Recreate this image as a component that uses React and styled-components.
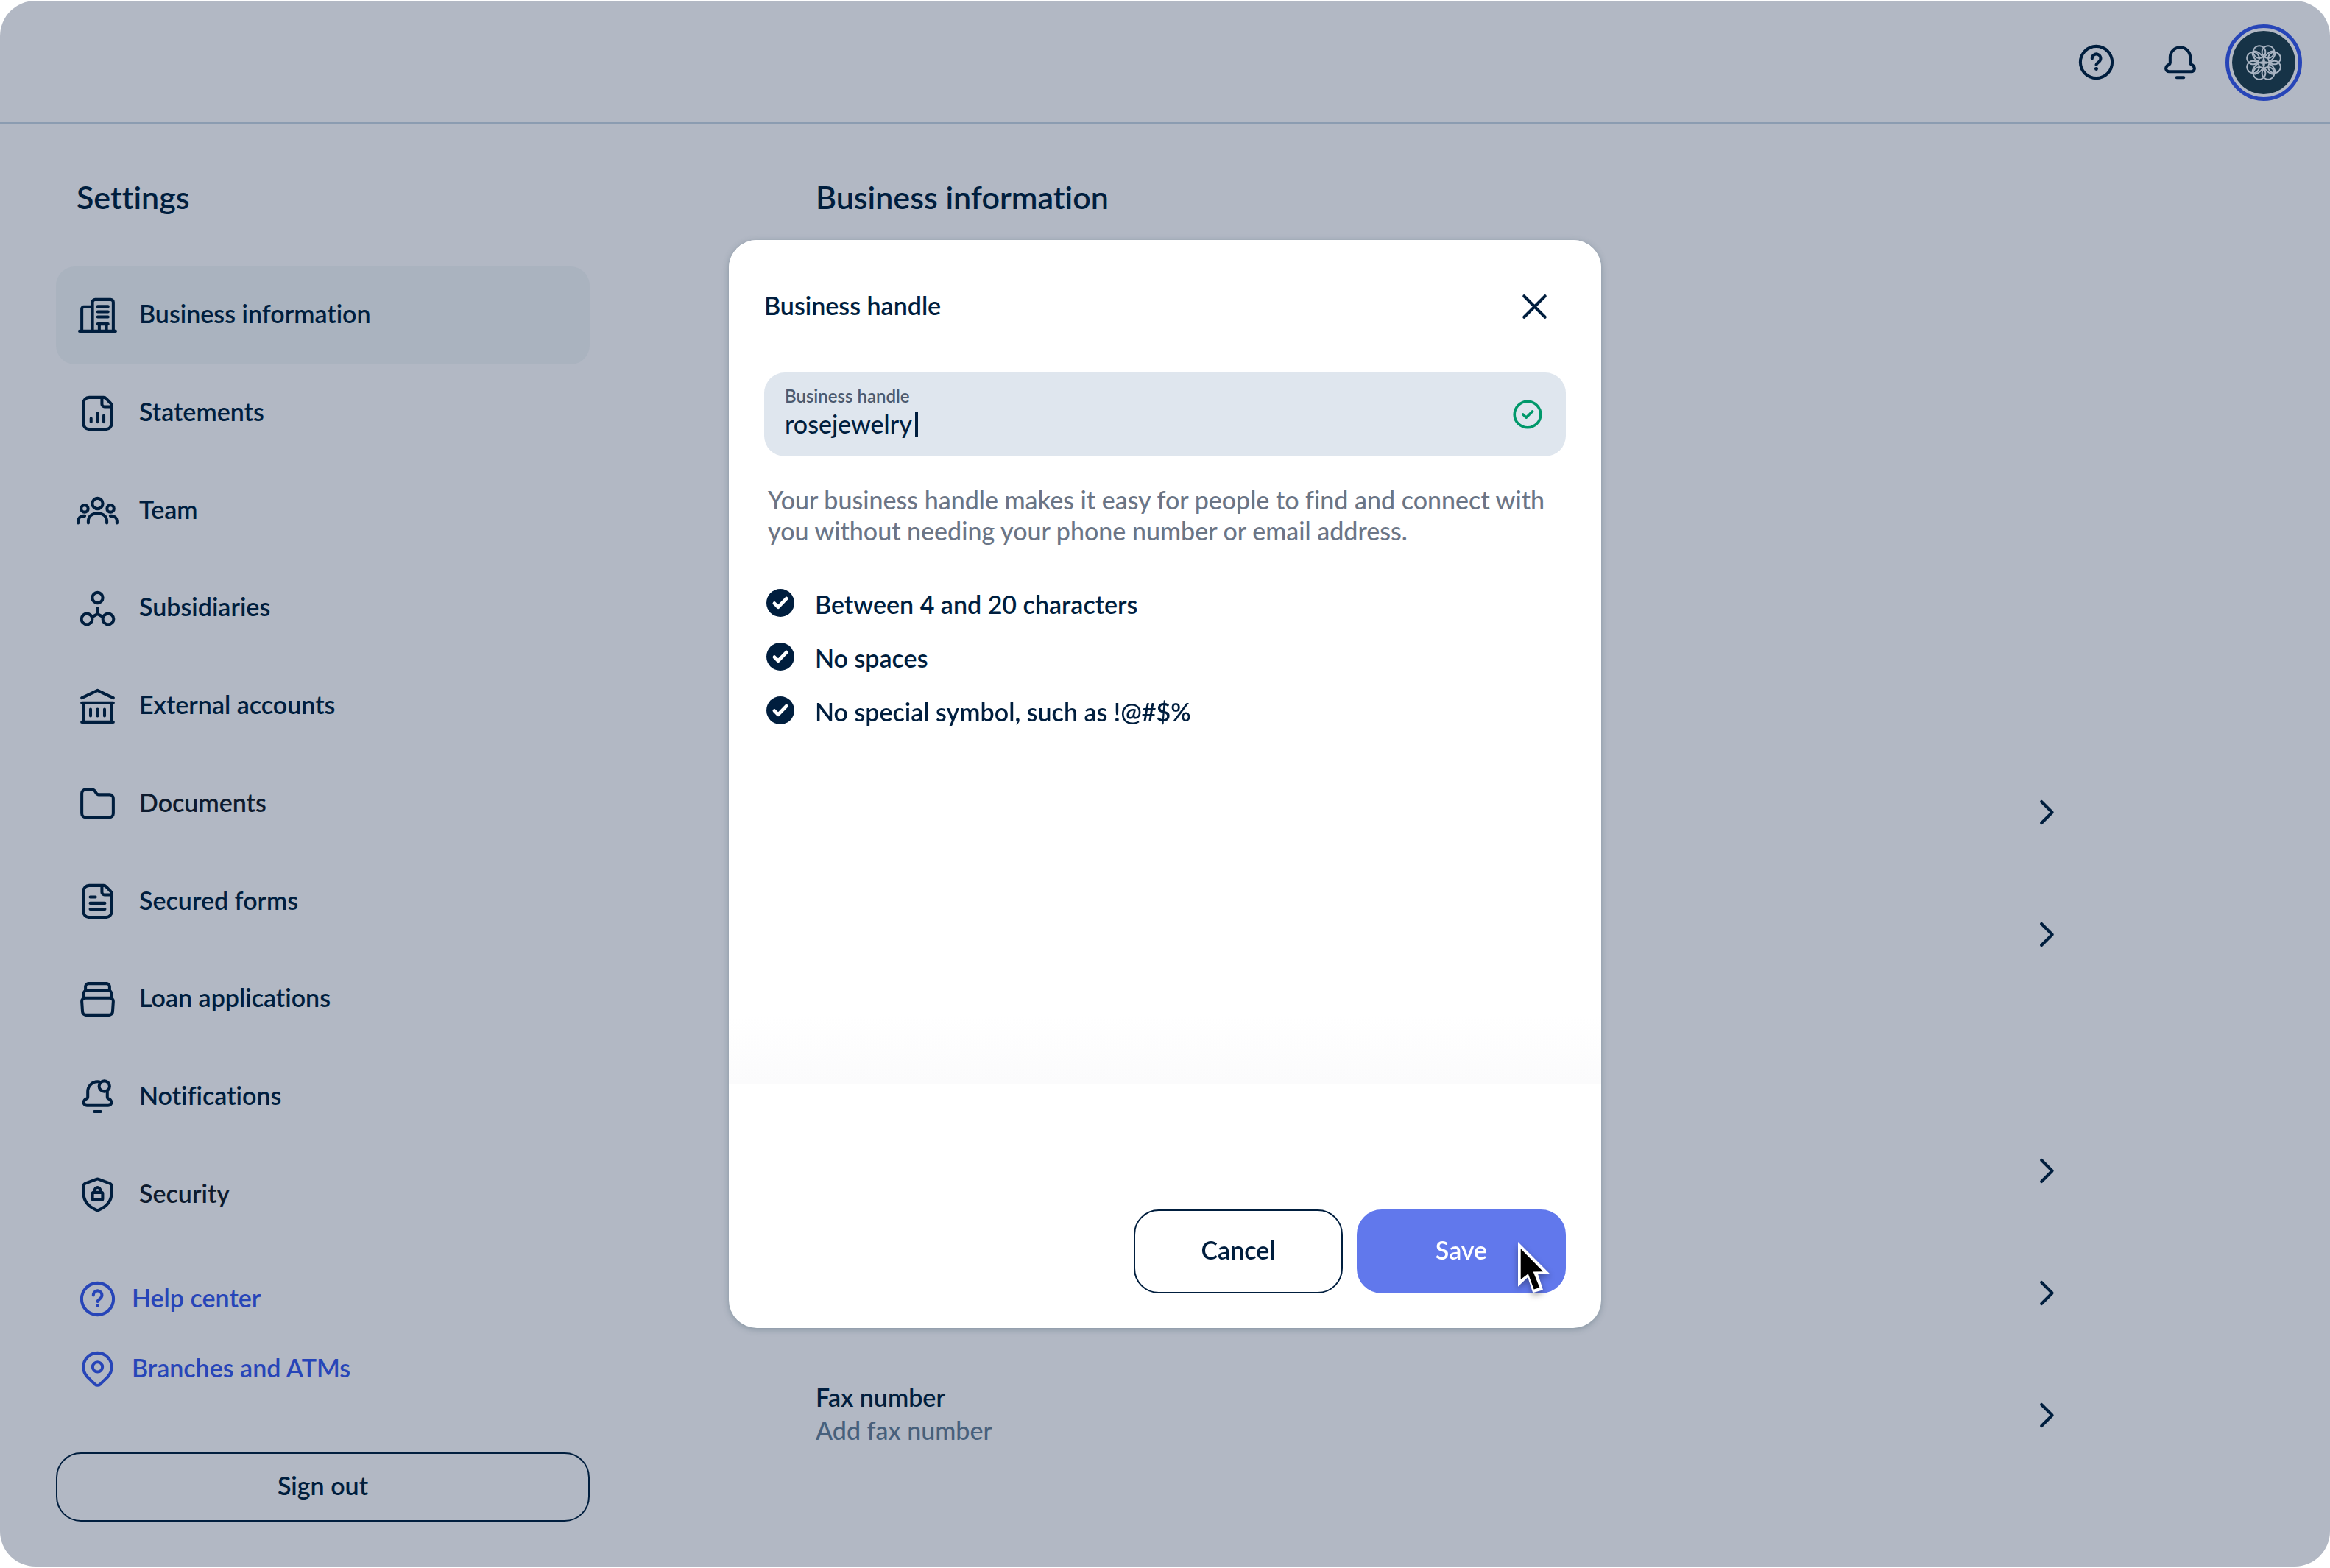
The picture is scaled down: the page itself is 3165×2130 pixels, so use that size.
import React, { useState } from "react";
import styled, { createGlobalStyle } from "styled-components";

const color = {
  canvas: "#b2b8c4",
  active: "#aab3bf",
  rule: "#8b9cb1",
  navy: "#001e3e",
  ink: "#0e1b2e",
  link: "#2745b8",
  slate: "#47607c",
  muted: "#6b7586",
  label: "#4b5a70",
  field: "#dfe6ee",
  primary: "#6178ec",
  success: "#00986a",
};

const GlobalStyle = createGlobalStyle`
  *, *::before, *::after { box-sizing: border-box; }
  body {
    margin: 0;
    background: #fff;
    color: ${color.navy};
    font-family: Lato, "Open Sans", sans-serif;
    font-size: 34px;
    line-height: 44px;
    font-variant-ligatures: none;
  }
  button, input { font: inherit; font-variant-ligatures: none; color: inherit; }
  button { cursor: pointer; }
  a { text-decoration: none; }
  ul { list-style: none; margin: 0; padding: 0; }
  h1, h2, p { margin: 0; }
`;

/* ---------- icons ---------- */

const Svg = styled.svg`
  width: ${(p) => p.$size || 57}px;
  height: ${(p) => p.$size || 57}px;
  flex: none;
  display: block;
  fill: none;
  stroke: currentColor;
  stroke-width: ${(p) => p.$stroke || 1.7};
  stroke-linecap: round;
  stroke-linejoin: round;
`;

const Icon = ({ size, stroke, children }) => (
  <Svg viewBox="0 0 24 24" $size={size} $stroke={stroke} aria-hidden="true">
    {children}
  </Svg>
);

const pageOutline =
  "M15.4 2.9H7.2a3.3 3.3 0 0 0-3.3 3.3v11.6a3.3 3.3 0 0 0 3.3 3.3h9.6a3.3 3.3 0 0 0 3.3-3.3V7.7a2 2 0 0 0-.6-1.5l-2.6-2.7a2 2 0 0 0-1.5-.6z";
const pageFold = "M14.5 3v3.7a1.5 1.5 0 0 0 1.5 1.5h4";

const BuildingIcon = () => (
  <Icon>
    <path d="M1.7 21h20.6M3 21V8.2a1.1 1.1 0 0 1 1.1-1.1h5M9.1 21V4.4a1.5 1.5 0 0 1 1.5-1.5h8.9A1.5 1.5 0 0 1 21 4.4V21" />
    <path d="M12.1 6.9H18M12.1 9.9H18M12.1 12.8H18M12.1 16.9H18M13 16.9V21M17.1 16.9V21" />
  </Icon>
);
const StatementIcon = () => (
  <Icon>
    <path d={pageOutline} />
    <path d={pageFold} />
    <path d="M8.3 14.9v2M12 12v4.9M15.6 13.3v3.6" />
  </Icon>
);
const TeamIcon = () => (
  <Icon>
    <circle cx="12" cy="8" r="3" />
    <circle cx="4.6" cy="10.9" r="2" />
    <circle cx="19.4" cy="10.9" r="2" />
    <path d="M6.7 19.2V18a4.2 4.2 0 0 1 4.2-4.2h2.2a4.2 4.2 0 0 1 4.2 4.2v1.2M.9 19.2V18a2.9 2.9 0 0 1 2.900-2.900h.9M23.100 19.200V18a2.900 2.900 0 0 0-2.900-2.900h-.9" />
  </Icon>
);
const NodesIcon = () => (
  <Icon>
    <circle cx="12" cy="5.9" r="3" />
    <circle cx="5.9" cy="18.1" r="3.1" />
    <circle cx="18.1" cy="18.1" r="3.1" />
    <path d="M12 12v3.2M8.9 16.9 12 15.2l3.1 1.7" />
  </Icon>
);
const BankIcon = () => (
  <Icon>
    <path d="M3 7.2 12 2.9l9 4.3M3 10h18M3.9 10v11M20.1 10v11M3 21h18M8 13.7v3.8M12 13.7v3.8M16 13.7v3.8" />
  </Icon>
);
const FolderIcon = () => (
  <Icon>
    <path d="M5.2 4h3.7a2 2 0 0 1 1.7 1l.6 1a1.8 1.8 0 0 0 1.5.9h6.1A2.2 2.2 0 0 1 21 9.1v8.6a2.2 2.2 0 0 1-2.2 2.2H5.2A2.2 2.2 0 0 1 3 17.7V6.2A2.2 2.2 0 0 1 5.2 4z" />
  </Icon>
);
const FormIcon = () => (
  <Icon>
    <path d={pageOutline} />
    <path d={pageFold} />
    <path d="M7.8 9.5h3M7.8 13h8.4M7.8 16.4h8.4" />
  </Icon>
);
const StackIcon = () => (
  <Icon>
    <path d="M5.1 6.9V4.8A1.8 1.8 0 0 1 6.9 3h10.2a1.8 1.8 0 0 1 1.8 1.8v2.1" />
    <path d="M4.1 11.2V8.6a1.7 1.7 0 0 1 1.7-1.7h12.4a1.7 1.7 0 0 1 1.7 1.7v2.6" />
    <path d="M4.8 11.3h14.4a1.8 1.8 0 0 1 1.8 1.9l-.4 6a1.9 1.9 0 0 1-1.9 1.8H5.3a1.9 1.9 0 0 1-1.9-1.8l-.4-6a1.8 1.8 0 0 1 1.8-1.9z" />
  </Icon>
);
const AlertIcon = () => (
  <Icon>
    <path d="M13 3.6a6 6 0 0 0-1-.1 5.6 5.6 0 0 0-5.6 5.7v3.1a1 1 0 0 1-.6.9A2.9 2.9 0 0 0 4 15.4a1.9 1.9 0 0 0 1.9 1.8h12.2a1.9 1.9 0 0 0 1.9-1.8 2.9 2.9 0 0 0-1.8-2.2 1 1 0 0 1-.6-.9V9.2" />
    <circle cx="15.9" cy="6.1" r="3" />
    <path d="M10.1 20.6h3.8" />
  </Icon>
);
const ShieldIcon = () => (
  <Icon>
    <path d="M11.4 3.3a1.6 1.6 0 0 1 1.2 0l6.2 2.3a1.8 1.8 0 0 1 1.2 1.7v4c0 4.4-2.6 7.6-7.2 9.6a1.9 1.9 0 0 1-1.6 0C6.6 18.9 4 15.7 4 11.3v-4a1.8 1.8 0 0 1 1.2-1.7z" />
    <rect x="9.1" y="10.9" width="5.8" height="4.3" rx=".7" />
    <path d="M10.4 10.8V9.6a1.6 1.6 0 0 1 3.2 0v1.2" />
  </Icon>
);
const HelpIcon = () => (
  <Icon>
    <circle cx="12" cy="12" r="9.1" />
    <path d="M9.6 9.9a2.45 2.45 0 1 1 4.2 1.6l-1.2 1.1a1.5 1.5 0 0 0-.6.9" />
    <circle cx="12" cy="15.8" r="1.05" fill="currentColor" stroke="none" />
  </Icon>
);
const PinIcon = () => (
  <Icon>
    <path d="M12 2.9a8.1 8.1 0 0 0-8.1 8.1c0 2.3.8 3.9 2.2 5.5l4.4 4.3a2.2 2.2 0 0 0 3 0l4.4-4.3c1.4-1.6 2.2-3.2 2.2-5.5A8.1 8.1 0 0 0 12 2.9z" />
    <circle cx="12" cy="10.9" r="2.8" />
  </Icon>
);
const BellIcon = () => (
  <Icon>
    <path d="M12 3.5a5.75 5.75 0 0 0-5.75 5.7v3.2a1.1 1.1 0 0 1-.6.9 2.9 2.9 0 0 0-1.85 2.2 1.9 1.9 0 0 0 1.9 1.9h12.6a1.9 1.9 0 0 0 1.9-1.9 2.9 2.9 0 0 0-1.85-2.2 1.1 1.1 0 0 1-.6-.9V9.2A5.75 5.75 0 0 0 12 3.5zM10 20.7h4" />
  </Icon>
);
const ChevronIcon = () => (
  <Icon>
    <path d="M8.9 5.9 15 12l-6.1 6.1" />
  </Icon>
);
const CloseIcon = () => (
  <Icon>
    <path d="M6 6l12 12M18 6 6 18" />
  </Icon>
);
const ValidIcon = () => (
  <Icon size={48} stroke={1.8}>
    <circle cx="12" cy="12" r="8.9" />
    <path d="M8.9 12l2.200 2.100 4.200-4.200" />
  </Icon>
);
const BulletIcon = () => (
  <Icon size={38} stroke={3}>
    <circle cx="12" cy="12" r="12" fill="currentColor" stroke="none" />
    <path d="M6.9 12.4l3.3 3.2 7-7.3" stroke="#fff" />
  </Icon>
);

const lobes = [22.5, 67.5, 112.5, 157.5, 202.5, 247.5, 292.5, 337.5];
const petals = [45, 135, 225, 315];
const Rosette = () => (
  <Svg viewBox="-72 -72 144 144" $size={48} $stroke={6} aria-hidden="true">
    {lobes.map((a) => (
      <circle key={a} cx="47" cy="0" r="25" transform={`rotate(${a})`} />
    ))}
    {petals.map((a) => (
      <ellipse key={a} cx="31" cy="0" rx="31" ry="15" transform={`rotate(${a})`} />
    ))}
  </Svg>
);

const Pointer = styled.svg`
  position: absolute;
  left: 217px;
  top: 42px;
  width: 44px;
  height: 70px;
  overflow: visible;
  filter: drop-shadow(0 4px 4px rgba(0, 0, 0, 0.35));
`;

/* ---------- shell ---------- */

const Window = styled.div`
  min-height: 100vh;
  padding: 1px 0 2px;
  display: flex;
`;
const Frame = styled.div`
  flex: 1;
  min-width: 0;
  display: flex;
  flex-direction: column;
  background: ${color.canvas};
  border-radius: 48px;
  overflow: hidden;
`;
const TopBar = styled.header`
  height: 168px;
  flex: none;
  display: flex;
  align-items: center;
  justify-content: flex-end;
  padding: 2px 38px 0 0;
  border-bottom: 3px solid ${color.rule};
`;
const IconButton = styled.button`
  display: flex;
  padding: 0;
  border: 0;
  background: none;
  margin-right: ${(p) => p.$after || 0}px;
`;
const Avatar = styled.button`
  width: 104px;
  height: 104px;
  padding: 4px;
  border: 5px solid ${color.link};
  border-radius: 50%;
  background: none;
`;
const AvatarFace = styled.span`
  display: flex;
  align-items: center;
  justify-content: center;
  height: 100%;
  border-radius: 50%;
  background: #163347;
  color: #a9b4c2;
`;
const Columns = styled.div`
  flex: 1;
  display: flex;
`;

/* ---------- sidebar ---------- */

const Sidebar = styled.aside`
  width: 801px;
  flex: none;
  display: flex;
  flex-direction: column;
  padding: 73px 0 61px 76px;
`;
const Heading = styled.h1`
  font-size: 43px;
  line-height: 52px;
  font-weight: 600;
`;
const SidebarTitle = styled(Heading)`
  padding-left: 28px;
  margin-bottom: 68px;
`;
const Nav = styled.nav`
  flex: 1;
  display: flex;
`;
const NavList = styled.ul`
  flex: 1;
  display: grid;
  grid-auto-rows: 1fr;
`;
const Label = styled.span`
  padding-bottom: 4px;
`;
const NavLink = styled.a`
  height: 100%;
  display: flex;
  align-items: center;
  gap: 28px;
  padding-left: 28px;
  border-radius: 26px;
  font-weight: 600;
  color: ${color.navy};
  background: ${(p) => (p.$active ? color.active : "transparent")};
`;
const NavLabel = styled(Label)`
  color: ${(p) => (p.$ink ? color.ink : "inherit")};
`;
const SupportList = styled.ul`
  display: flex;
  flex-direction: column;
  gap: 38px;
  padding: 47px 0 85px 28px;
`;
const SupportLink = styled.a`
  display: flex;
  align-items: center;
  gap: 18px;
  font-weight: 600;
  color: ${color.link};
`;
const Button = styled.button`
  position: relative;
  height: ${(p) => p.$height || 114}px;
  width: ${(p) => p.$width || "284px"};
  padding: 0 0 4px;
  border: 2px solid ${(p) => (p.$primary ? color.primary : color.navy)};
  border-radius: 34px;
  background: ${(p) => (p.$primary ? color.primary : "transparent")};
  color: ${(p) => (p.$primary ? "#fff" : color.navy)};
  font-weight: 600;
`;

/* ---------- main column ---------- */

const Main = styled.main`
  flex: 1;
  max-width: 2008px;
  padding: 73px 0 0 307px;
`;
const Group = styled.ul`
  margin-top: ${(p) => p.$gap}px;
`;
const Row = styled.button`
  width: 100%;
  height: 166px;
  display: flex;
  align-items: center;
  justify-content: space-between;
  padding: 0;
  border: 0;
  background: none;
  text-align: left;
`;
const RowText = styled.span`
  display: flex;
  flex-direction: column;
  padding-bottom: 4px;
`;
const RowName = styled.span`
  font-weight: 600;
  line-height: 45px;
`;
const RowValue = styled.span`
  color: ${color.slate};
  font-weight: 500;
  line-height: 45px;
`;

/* ---------- dialog ---------- */

const Overlay = styled.div`
  position: fixed;
  inset: 0;
  display: flex;
  align-items: center;
  justify-content: center;
`;
const Dialog = styled.section`
  width: 1185px;
  max-width: 100%;
  display: flex;
  flex-direction: column;
  background: #fff;
  border-radius: 38px;
  box-shadow: 0 2px 8px rgba(50, 80, 95, 0.35);
`;
const DialogBody = styled.div`
  min-height: 1146px;
  display: flex;
  flex-direction: column;
  padding: 62px 48px 0;
  border-radius: 38px 38px 0 0;
  background: linear-gradient(to top, #fbfbfc, #fff 92px);
`;
const DialogHead = styled.header`
  display: flex;
  align-items: center;
  justify-content: space-between;
  padding-right: 14px;
  margin-bottom: 61px;
`;
const DialogTitle = styled.h2`
  font-size: 34px;
  line-height: 44px;
  font-weight: 600;
  padding-bottom: 4px;
`;
const Field = styled.div`
  height: 114px;
  display: flex;
  align-items: center;
  justify-content: space-between;
  padding: 0 28px 0 28px;
  border-radius: 28px;
  background: ${color.field};
`;
const FieldText = styled.div`
  display: flex;
  flex-direction: column;
  gap: 2px;
  padding-bottom: 6px;
`;
const FieldLabel = styled.label`
  font-size: 24px;
  line-height: 30px;
  font-weight: 600;
  color: ${color.label};
`;
const FieldValue = styled.div`
  display: flex;
  align-items: center;
  gap: 4px;
`;
const FieldInput = styled.input`
  field-sizing: content;
  height: 42px;
  line-height: 42px;
  padding: 0;
  border: 0;
  outline: 0;
  background: none;
  font-weight: 500;
`;
const Caret = styled.span`
  width: 4px;
  height: 34px;
  background: ${color.navy};
`;
const FieldStatus = styled.span`
  color: ${color.success};
`;
const Hint = styled.p`
  margin-top: 38px;
  padding: 0 5px;
  line-height: 42px;
  font-weight: 500;
  color: ${color.muted};
`;
const Rules = styled.ul`
  display: flex;
  flex-direction: column;
  gap: 25px;
  margin-top: 53px;
  padding-left: 3px;
`;
const Rule = styled.li`
  display: flex;
  align-items: center;
  gap: 28px;
  height: 48px;
  font-weight: 600;
`;
const RuleText = styled.span`
  padding-top: 3px;
`;
const DialogFoot = styled.footer`
  display: flex;
  justify-content: flex-end;
  gap: 19px;
  padding: 171px 48px 47px;
`;

const navItems = [
  { name: "Business information", Glyph: BuildingIcon, active: true },
  { name: "Statements", Glyph: StatementIcon },
  { name: "Team", Glyph: TeamIcon },
  { name: "Subsidiaries", Glyph: NodesIcon },
  { name: "External accounts", Glyph: BankIcon },
  { name: "Documents", Glyph: FolderIcon, ink: true },
  { name: "Secured forms", Glyph: FormIcon },
  { name: "Loan applications", Glyph: StackIcon },
  { name: "Notifications", Glyph: AlertIcon },
  { name: "Security", Glyph: ShieldIcon, ink: true },
];

const supportItems = [
  { name: "Help center", Glyph: HelpIcon },
  { name: "Branches and ATMs", Glyph: PinIcon },
];

const rules = [
  "Between 4 and 20 characters",
  "No spaces",
  "No special symbol, such as !@#$%",
];

const groups = [
  { gap: 726, rows: [{}, {}] },
  { gap: 155, rows: [{}, {}, { name: "Fax number", value: "Add fax number" }] },
];

const HandleDialog = () => {
  const [handle, setHandle] = useState("rosejewelry");
  return (
    <Overlay>
      <Dialog role="dialog" aria-modal="true" aria-labelledby="dialog-title">
        <DialogBody>
          <DialogHead>
            <DialogTitle id="dialog-title">Business handle</DialogTitle>
            <IconButton aria-label="Close">
              <CloseIcon />
            </IconButton>
          </DialogHead>
          <Field>
            <FieldText>
              <FieldLabel htmlFor="handle">Business handle</FieldLabel>
              <FieldValue>
                <FieldInput
                  id="handle"
                  value={handle}
                  onChange={(e) => setHandle(e.target.value)}
                />
                <Caret />
              </FieldValue>
            </FieldText>
            <FieldStatus>
              <ValidIcon />
            </FieldStatus>
          </Field>
          <Hint>
            Your business handle makes it easy for people to find and connect with you
            without needing your phone number or email address.
          </Hint>
          <Rules>
            {rules.map((rule) => (
              <Rule key={rule}>
                <BulletIcon />
                <RuleText>{rule}</RuleText>
              </Rule>
            ))}
          </Rules>
        </DialogBody>
        <DialogFoot>
          <Button>Cancel</Button>
          <Button $primary>
            Save
            <Pointer viewBox="0 0 44 70" aria-hidden="true">
              <path
                fill="#fff"
                d="M0 0 43.6 43.7 27 43.2 34 65.3 20.2 69.3 13.3 48 0 60.7z"
              />
              <path
                fill="#000"
                d="M3.7 9.3 34 40.3 20.6 40.6 29.4 62 21.6 64.5 13.8 43.3 3.7 51z"
              />
            </Pointer>
          </Button>
        </DialogFoot>
      </Dialog>
    </Overlay>
  );
};

export default function App() {
  return (
    <>
      <GlobalStyle />
      <Window>
        <Frame>
          <TopBar>
            <IconButton $after={57} aria-label="Help">
              <HelpIcon />
            </IconButton>
            <IconButton $after={33} aria-label="Alerts">
              <BellIcon />
            </IconButton>
            <Avatar aria-label="Account">
              <AvatarFace>
                <Rosette />
              </AvatarFace>
            </Avatar>
          </TopBar>
          <Columns>
            <Sidebar>
              <SidebarTitle as="h2">Settings</SidebarTitle>
              <Nav aria-label="Settings">
                <NavList>
                  {navItems.map(({ name, Glyph, active, ink }) => (
                    <li key={name}>
                      <NavLink
                        href="#"
                        $active={active}
                        aria-current={active ? "page" : undefined}
                      >
                        <Glyph />
                        <NavLabel $ink={ink}>{name}</NavLabel>
                      </NavLink>
                    </li>
                  ))}
                </NavList>
              </Nav>
              <SupportList>
                {supportItems.map(({ name, Glyph }) => (
                  <li key={name}>
                    <SupportLink href="#">
                      <Glyph />
                      <Label>{name}</Label>
                    </SupportLink>
                  </li>
                ))}
              </SupportList>
              <Button $height={94} $width="100%">
                Sign out
              </Button>
            </Sidebar>
            <Main>
              <Heading>Business information</Heading>
              {groups.map(({ gap, rows }) => (
                <Group key={gap} $gap={gap}>
                  {rows.map(({ name, value }, i) => (
                    <li key={i}>
                      <Row aria-label={name || "Edit"}>
                        <RowText>
                          {name && <RowName>{name}</RowName>}
                          {value && <RowValue>{value}</RowValue>}
                        </RowText>
                        <ChevronIcon />
                      </Row>
                    </li>
                  ))}
                </Group>
              ))}
            </Main>
          </Columns>
        </Frame>
      </Window>
      <HandleDialog />
    </>
  );
}
